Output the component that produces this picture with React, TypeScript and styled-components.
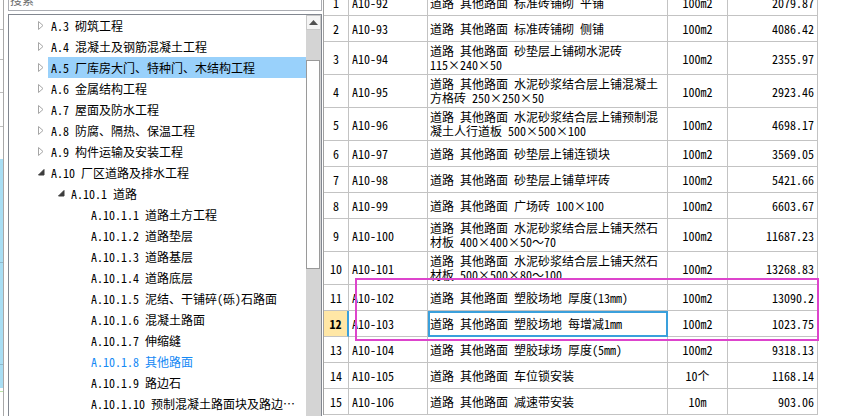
import React from "react"
import styled, { createGlobalStyle } from "styled-components"

type TreeNode = {
  level: number
  code: string
  name: string
  expander?: "open" | "closed"
  selected?: boolean
  current?: boolean
}

type Item = {
  no: number
  code: string
  name: string[]
  unit: string
  price: string
}

const GlobalStyle = createGlobalStyle`
  html, body {
    margin: 0;
    padding: 0;
    background: #fff;
  }
  body {
    font-family: "Noto Sans Mono CJK SC", "Noto Sans CJK SC", sans-serif;
    font-size: 12px;
    color: #000;
  }
`

const FONT = `"Noto Sans Mono CJK SC", "Noto Sans CJK SC", sans-serif`

let Root = styled.div`
  display: flex;
  width: 856px;
  height: 416px;
  overflow: hidden;
  background: #fff;
`

// a sliver of the window behind, at the very left edge
let Peek = styled.div`
  width: 8px;
  flex: none;
  display: flex;
`

let PeekCol = styled.div`
  width: 3px;
  border-right: 1px solid #a8a8a8;
  display: flex;
  flex-direction: column;
`

let PeekCell = styled.div<{ $h: number; $bg?: string; $line?: string }>`
  flex: none;
  height: ${p => p.$h}px;
  box-sizing: border-box;
  background: ${p => p.$bg || "transparent"};
  border-bottom: 1px solid ${p => p.$line || "transparent"};
`

let Sidebar = styled.div`
  width: 314px;
  flex: none;
  display: flex;
  flex-direction: column;
  gap: 3px;
`

let SearchBox = styled.div`
  height: 23px;
  margin-top: -12px;
  box-sizing: border-box;
  border: 1px solid #abadb3;
  display: flex;
  align-items: center;
  padding-left: 1px;
  color: #6d6d6d;
  font-family: ${FONT};
  font-size: 12px;
`

let TreePanel = styled.div`
  flex: 1;
  display: flex;
  border: 1px solid #828790;
  border-bottom: none;
  min-height: 0;
`

let TreeList = styled.div`
  flex: 1;
  display: flex;
  flex-direction: column;
  min-width: 0;
`

let TreeRow = styled.div<{ $level: number }>`
  height: 21px;
  flex: none;
  display: flex;
  align-items: center;
  padding-left: ${p => 25 + (p.$level - 1) * 20}px;
`

let Expander = styled.span`
  width: 14px;
  height: 21px;
  flex: none;
  display: flex;
  align-items: center;
  justify-content: center;
`

let Label = styled.span<{ $selected?: boolean; $current?: boolean }>`
  flex: 1;
  min-width: 0;
  height: 21px;
  line-height: 21px;
  padding-left: 3px;
  white-space: nowrap;
  overflow: hidden;
  font-family: ${FONT};
  font-size: 12px;
  color: ${p => (p.$current ? "#1589f5" : "#000")};
  background: ${p => (p.$selected ? "#99d1fb" : "transparent")};
`

let Scrollbar = styled.div`
  width: 15px;
  flex: none;
  display: flex;
  flex-direction: column;
  background: #d4d4d4;
`

let ScrollButton = styled.div`
  height: 15px;
  box-sizing: border-box;
  border: 1px solid #c8c8c8;
  background: #f4f4f4;
  display: flex;
  align-items: center;
  justify-content: center;
`

let ScrollThumb = styled.div`
  margin-top: 30px;
  height: 209px;
  margin-right: 1px;
  box-sizing: border-box;
  border: 1px solid #9a9a9a;
  background: #fff;
`

let TableArea = styled.div`
  flex: 1;
  position: relative;
  display: flex;
  flex-direction: column;
  align-items: flex-start;
`

let Grid = styled.div`
  margin-top: -10px;
  margin-left: 1px;
  border-left: 1px solid #a0a0a0;
  display: flex;
  flex-direction: column;
`

let Row = styled.div<{ $tall?: boolean }>`
  display: grid;
  grid-template-columns: 25px 79px 240px 60px 90px;
  height: ${p => (p.$tall ? 33 : 26)}px;
  flex: none;
`

let Cell = styled.div<{ $align?: "left" | "center" | "right" }>`
  box-sizing: border-box;
  border-right: 1px solid #c3c3c3;
  border-bottom: 1px solid #c3c3c3;
  display: flex;
  align-items: center;
  justify-content: ${p =>
    p.$align === "right" ? "flex-end" : p.$align === "center" ? "center" : "flex-start"};
  padding: 0 3px;
  overflow: hidden;
  white-space: nowrap;
  font-family: ${FONT};
  font-size: 12px;
`

let HeadCell = styled(Cell)<{ $active?: boolean }>`
  padding: 0;
  background: ${p => (p.$active ? "#ffe7a6" : "#fff")};
  font-weight: ${p => (p.$active ? "bold" : "normal")};
  border-right: ${p => (p.$active ? "2px solid #3aa0dc" : "1px solid #c3c3c3")};
`

let NameCell = styled(Cell)<{ $active?: boolean }>`
  padding-left: 2px;
  flex-direction: column;
  align-items: flex-start;
  justify-content: center;
  line-height: 14px;
  outline: ${p => (p.$active ? "2px solid #3aa0dc" : "none")};
  outline-offset: -2px;
`

let Annotation = styled.div`
  position: absolute;
  left: 33px;
  top: 278px;
  width: 464px;
  height: 63px;
  box-sizing: border-box;
  border: 2px solid #dd44cc;
  pointer-events: none;
`

const tree: TreeNode[] = [
  { level: 1, code: "A.3", name: "砌筑工程", expander: "closed" },
  { level: 1, code: "A.4", name: "混凝土及钢筋混凝土工程", expander: "closed" },
  { level: 1, code: "A.5", name: "厂库房大门、特种门、木结构工程", expander: "closed", selected: true },
  { level: 1, code: "A.6", name: "金属结构工程", expander: "closed" },
  { level: 1, code: "A.7", name: "屋面及防水工程", expander: "closed" },
  { level: 1, code: "A.8", name: "防腐、隔热、保温工程", expander: "closed" },
  { level: 1, code: "A.9", name: "构件运输及安装工程", expander: "closed" },
  { level: 1, code: "A.10", name: "厂区道路及排水工程", expander: "open" },
  { level: 2, code: "A.10.1", name: "道路", expander: "open" },
  { level: 3, code: "A.10.1.1", name: "道路土方工程" },
  { level: 3, code: "A.10.1.2", name: "道路垫层" },
  { level: 3, code: "A.10.1.3", name: "道路基层" },
  { level: 3, code: "A.10.1.4", name: "道路底层" },
  { level: 3, code: "A.10.1.5", name: "泥结、干铺碎(砾)石路面" },
  { level: 3, code: "A.10.1.6", name: "混凝土路面" },
  { level: 3, code: "A.10.1.7", name: "伸缩缝" },
  { level: 3, code: "A.10.1.8", name: "其他路面", current: true },
  { level: 3, code: "A.10.1.9", name: "路边石" },
  { level: 3, code: "A.10.1.10", name: "预制混凝土路面块及路边…" },
]

const items: Item[] = [
  { no: 1, code: "A10-92", name: ["道路 其他路面 标准砖铺砌 平铺"], unit: "100m2", price: "2079.87" },
  { no: 2, code: "A10-93", name: ["道路 其他路面 标准砖铺砌 侧铺"], unit: "100m2", price: "4086.42" },
  { no: 3, code: "A10-94", name: ["道路 其他路面 砂垫层上铺砌水泥砖", "115×240×50"], unit: "100m2", price: "2355.97" },
  { no: 4, code: "A10-95", name: ["道路 其他路面 水泥砂浆结合层上铺混凝土", "方格砖 250×250×50"], unit: "100m2", price: "2923.46" },
  { no: 5, code: "A10-96", name: ["道路 其他路面 水泥砂浆结合层上铺预制混", "凝土人行道板 500×500×100"], unit: "100m2", price: "4698.17" },
  { no: 6, code: "A10-97", name: ["道路 其他路面 砂垫层上铺连锁块"], unit: "100m2", price: "3569.05" },
  { no: 7, code: "A10-98", name: ["道路 其他路面 砂垫层上铺草坪砖"], unit: "100m2", price: "5421.66" },
  { no: 8, code: "A10-99", name: ["道路 其他路面 广场砖 100×100"], unit: "100m2", price: "6603.67" },
  { no: 9, code: "A10-100", name: ["道路 其他路面 水泥砂浆结合层上铺天然石", "材板 400×400×50～70"], unit: "100m2", price: "11687.23" },
  { no: 10, code: "A10-101", name: ["道路 其他路面 水泥砂浆结合层上铺天然石", "材板 500×500×80～100"], unit: "100m2", price: "13268.83" },
  { no: 11, code: "A10-102", name: ["道路 其他路面 塑胶场地 厚度(13mm)"], unit: "100m2", price: "13090.2" },
  { no: 12, code: "A10-103", name: ["道路 其他路面 塑胶场地 每增减1mm"], unit: "100m2", price: "1023.75" },
  { no: 13, code: "A10-104", name: ["道路 其他路面 塑胶球场 厚度(5mm)"], unit: "100m2", price: "9318.13" },
  { no: 14, code: "A10-105", name: ["道路 其他路面 车位锁安装"], unit: "10个", price: "1168.14" },
  { no: 15, code: "A10-106", name: ["道路 其他路面 减速带安装"], unit: "10m", price: "903.06" },
]

const ACTIVE_ROW = 12

function ExpanderIcon({ state }: { state?: "open" | "closed" }) {
  if (state === "closed")
    return (
      <svg width="6" height="9" viewBox="0 0 6 9">
        <path d="M0.5 0.5 L5 4.5 L0.5 8.5 Z" fill="#fff" stroke="#a6a6a6" strokeWidth="1" />
      </svg>
    )
  if (state === "open")
    return (
      <svg width="7" height="7" viewBox="0 0 7 7">
        <path d="M6 0.5 L6 6 L0.5 6 Z" fill="#3c3c3c" stroke="#3c3c3c" strokeWidth="1" />
      </svg>
    )
  return null
}

function Tree() {
  return (
    <TreeList>
      {tree.map(n => (
        <TreeRow key={n.code} $level={n.level}>
          <Expander>
            <ExpanderIcon state={n.expander} />
          </Expander>
          <Label $selected={n.selected} $current={n.current}>
            {n.code} {n.name}
          </Label>
        </TreeRow>
      ))}
    </TreeList>
  )
}

function ItemTable() {
  return (
    <Grid>
      {items.map(it => {
        let active = it.no === ACTIVE_ROW
        return (
          <Row key={it.no} $tall={it.name.length > 1}>
            <HeadCell $align="center" $active={active}>
              {it.no}
            </HeadCell>
            <Cell>{it.code}</Cell>
            <NameCell $active={active}>
              {it.name.map(line => (
                <span key={line}>{line}</span>
              ))}
            </NameCell>
            <Cell $align="center">{it.unit}</Cell>
            <Cell $align="right">{it.price}</Cell>
          </Row>
        )
      })}
    </Grid>
  )
}

export default function App() {
  return (
    <>
      <GlobalStyle />
      <Root>
        <Peek>
          <PeekCol>
            <PeekCell $h={30} $line="#bdbdbd" />
            <PeekCell $h={30} $line="#bdbdbd" />
            <PeekCell $h={33} $line="#bdbdbd" />
            <PeekCell $h={34} $line="#bdbdbd" />
            <PeekCell $h={32} />
            <PeekCell $h={104} $bg="#a9def4" $line="#8fb9cc" />
            <PeekCell $h={102} $bg="#a9def4" $line="#8fb9cc" />
            <PeekCell $h={23} $bg="#a9def4" />
            <PeekCell $h={4} $line="#b9e2a6" />
          </PeekCol>
        </Peek>
        <Sidebar>
          <SearchBox>搜索</SearchBox>
          <TreePanel>
            <Tree />
            <Scrollbar>
              <ScrollButton>
                <svg width="9" height="5" viewBox="0 0 9 5">
                  <path d="M0 5 L4.5 0 L9 5 Z" fill="#505050" />
                </svg>
              </ScrollButton>
              <ScrollThumb />
            </Scrollbar>
          </TreePanel>
        </Sidebar>
        <TableArea>
          <ItemTable />
          <Annotation />
        </TableArea>
      </Root>
    </>
  )
}
